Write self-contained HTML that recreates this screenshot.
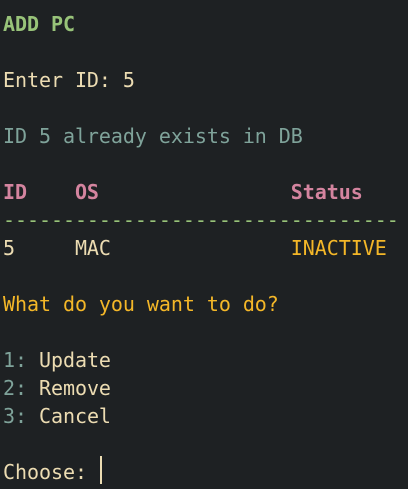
<!DOCTYPE html>
<html><head><meta charset="utf-8"><style>
html,body{margin:0;padding:0;background:#1e2123;width:408px;height:489px;overflow:hidden}
pre{margin:0;padding:10px 0 0 3px;font-family:"DejaVu Sans Mono","Liberation Mono",monospace;font-size:20px;letter-spacing:-0.05px;line-height:28px;color:#ecdcb2}
.g{color:#98c379;font-weight:bold}
.t{color:#7fa39a}
.p{color:#d4849f;font-weight:bold}
.d{color:#98c379}
.o{color:#f4b728}
.cur{display:inline-block;width:2px;height:28px;background:#ecdcb2;vertical-align:top;margin-left:1px;margin-top:-2px}
</style></head><body><pre><span class="g">ADD PC</span>

Enter ID: 5

<span class="t">ID 5 already exists in DB</span>

<span class="p">ID    OS                Status</span>
<span class="d">---------------------------------</span>
5     MAC               <span class="o">INACTIVE</span>

<span class="o">What do you want to do?</span>

<span class="t">1:</span> Update
<span class="t">2:</span> Remove
<span class="t">3:</span> Cancel

Choose: <span class="cur"></span></pre></body></html>
